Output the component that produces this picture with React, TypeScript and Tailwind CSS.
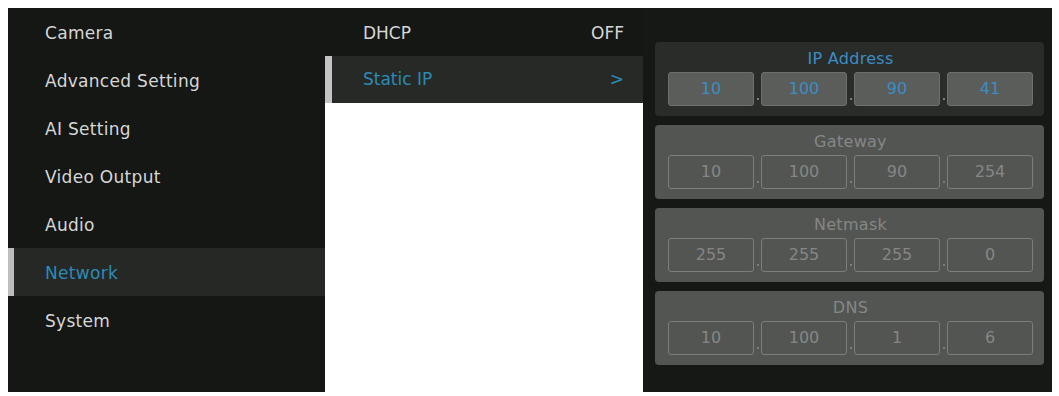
import React from 'react';

const font = { fontFamily: '"DejaVu Sans", "Liberation Sans", sans-serif' };

const menu = ['Camera', 'Advanced Setting', 'AI Setting', 'Video Output', 'Audio', 'Network', 'System'];

type Group = { title: string; values: string[]; active?: boolean };

const groups: Group[] = [
  { title: 'IP Address', values: ['10', '100', '90', '41'], active: true },
  { title: 'Gateway', values: ['10', '100', '90', '254'] },
  { title: 'Netmask', values: ['255', '255', '255', '0'] },
  { title: 'DNS', values: ['10', '100', '1', '6'] },
];

function AddressCard({ group }: { group: Group }) {
  const active = group.active;
  return (
    <div
      className={
        'h-[74px] rounded-[4px] pl-[13px] pr-[11px] pt-[4px] flex flex-col ' +
        (active ? 'bg-[#2a2c2a]' : 'bg-[#535553]')
      }
    >
      <div
        className={
          'h-[26px] text-center text-[16px] leading-[26px] tracking-[0.3px] ' +
          (active ? 'text-[#3a8ec4]' : 'text-[#858785]')
        }
      >
        {group.title}
      </div>
      <div className="flex items-end gap-[7px]">
        {group.values.map((v, i) => (
          <div key={i} className="relative">
            <div
              className={
                'w-[86px] h-[34px] rounded-[3px] border flex items-center justify-center text-[16px] ' +
                (active
                  ? 'bg-[#5b5d5b] border-[#6e706e] text-[#3a8ec4]'
                  : 'bg-[#535553] border-[#7c7e7c] text-[#858785]')
              }
            >
              {v}
            </div>
            {i < 3 && (
              <div className="absolute -right-[5px] bottom-[6px] w-[2px] h-[2px] bg-[#7c7e7c]" />
            )}
          </div>
        ))}
      </div>
    </div>
  );
}

export default function App() {
  return (
    <div className="w-[1059px] h-[396px] bg-white p-2" style={font}>
      <div className="flex h-[384px] w-[1044px] bg-[#141714]">
        {/* Main menu */}
        <div className="w-[317px] flex flex-col">
          {menu.map((item) => {
            const selected = item === 'Network';
            return (
              <div
                key={item}
                className={
                  'h-12 flex items-center pt-[3px] text-[17px] tracking-[0.3px] ' +
                  (selected
                    ? 'bg-[#262826] text-[#2b8bb6] border-l-[6px] border-[#bdbdbd] pl-[31px]'
                    : 'text-[#d6d6d6] pl-[37px]')
                }
              >
                {item}
              </div>
            );
          })}
        </div>

        {/* Sub menu */}
        <div className="w-[318px] flex flex-col">
          <div className="h-12 flex items-center justify-between pt-[3px] pl-[38px] pr-[19px] text-[17px] text-[#d6d6d6]">
            <span>DHCP</span>
            <span>OFF</span>
          </div>
          <div className="h-[47px] flex items-center justify-between bg-[#272927] border-l-[7px] border-[#c4c4c4] pl-[31px] pr-[19px] text-[17px] text-[#2b8bb6]">
            <span>Static IP</span>
            <span>&gt;</span>
          </div>
          <div className="flex-1 bg-white" />
        </div>

        {/* Address panel */}
        <div className="flex-1 pt-[34px] pl-3 pr-2 flex flex-col gap-[9px] bg-[#151815]">
          {groups.map((g) => (
            <AddressCard key={g.title} group={g} />
          ))}
        </div>
      </div>
    </div>
  );
}
